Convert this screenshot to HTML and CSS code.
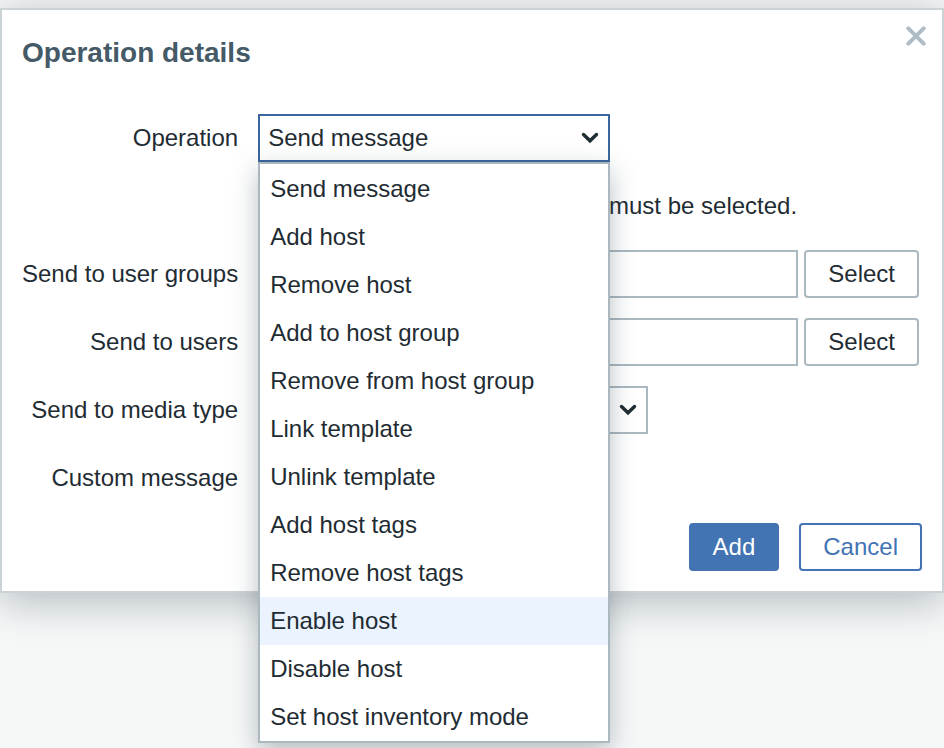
FILE: index.html
```html
<!DOCTYPE html>
<html lang="en">
<head>
<meta charset="utf-8">
<title>Operation details</title>
<link rel="stylesheet" href="styles.css">
</head>
<body>
<form class="dialog" role="dialog" aria-labelledby="dialog-title">
  <header class="dialog-header">
    <h1 class="dialog-title" id="dialog-title">Operation details</h1>
    <button class="close" type="button" aria-label="Close">
      <svg viewBox="0 0 20 20" width="20" height="20" aria-hidden="true"><path d="M2.3 2.3 17.7 17.7M17.7 2.3 2.3 17.7"/></svg>
    </button>
  </header>

  <div class="fields">
    <label class="label" for="operation">Operation</label>
    <div class="control">
      <div class="select-box operation">
        <select class="select is-open" id="operation">
          <option>Send message</option>
        </select>
        <svg class="chevron" viewBox="0 0 18 12" width="18" height="12" aria-hidden="true"><path d="M2.5 2.5 9 8.8 15.5 2.5"/></svg>
        <ul class="menu" role="listbox" aria-label="Operation">
          <li class="menu-item" role="option">Send message</li>
          <li class="menu-item" role="option">Add host</li>
          <li class="menu-item" role="option">Remove host</li>
          <li class="menu-item" role="option">Add to host group</li>
          <li class="menu-item" role="option">Remove from host group</li>
          <li class="menu-item" role="option">Link template</li>
          <li class="menu-item" role="option">Unlink template</li>
          <li class="menu-item" role="option">Add host tags</li>
          <li class="menu-item" role="option">Remove host tags</li>
          <li class="menu-item is-hovered" role="option">Enable host</li>
          <li class="menu-item" role="option">Disable host</li>
          <li class="menu-item" role="option">Set host inventory mode</li>
        </ul>
      </div>
    </div>

    <p class="note">* At least one user or user group must be selected.</p>

    <label class="label" for="groups">Send to user groups</label>
    <div class="control">
      <input class="input" id="groups" type="text">
      <button class="button" type="button">Select</button>
    </div>

    <label class="label" for="users">Send to users</label>
    <div class="control">
      <input class="input" id="users" type="text">
      <button class="button" type="button">Select</button>
    </div>

    <label class="label" for="media">Send to media type</label>
    <div class="control">
      <div class="select-box media">
        <select class="select" id="media">
          <option></option>
        </select>
        <svg class="chevron" viewBox="0 0 18 12" width="18" height="12" aria-hidden="true"><path d="M2.5 2.5 9 8.8 15.5 2.5"/></svg>
      </div>
    </div>

    <label class="label" for="custom">Custom message</label>
    <div class="control">
      <input class="checkbox" id="custom" type="checkbox">
    </div>
  </div>

  <footer class="dialog-footer">
    <button class="button primary" type="submit">Add</button>
    <button class="button secondary" type="button">Cancel</button>
  </footer>
</form>
</body>
</html>
```
FILE: styles.css
```css
* {
  box-sizing: border-box;
}

body {
  min-height: 100vh;
  margin: 0;
  padding-top: 8px;
  background: #f6f8f8;
  color: #1f2c33;
  font: 24px/48px "Liberation Sans", Arial, sans-serif;
}

button,
input,
select {
  font: inherit;
  color: inherit;
}

.dialog {
  padding: 0 20px 20px;
  background: #fff;
  border: 2px solid #ccd3d7;
  box-shadow: 0 8px 40px rgba(54, 70, 82, 0.36);
}

.dialog-header {
  display: flex;
  justify-content: space-between;
  align-items: flex-start;
  padding-top: 16px;
  margin-bottom: 34px;
}

.dialog-title {
  margin: 0;
  color: #455a67;
  font-size: 28px;
  line-height: 54px;
}

.close {
  display: flex;
  margin-right: -4px;
  padding: 0;
  border: 0;
  background: none;
}

.close path {
  fill: none;
  stroke: #b0bcc3;
  stroke-width: 4;
  stroke-linecap: round;
}

.fields {
  display: grid;
  grid-template-columns: auto 1fr;
  gap: 20px;
}

.label {
  text-align: right;
  white-space: nowrap;
}

.note {
  grid-column: 2;
  margin: 0;
  white-space: nowrap;
}

.control {
  display: flex;
  align-items: center;
  gap: 6px;
  height: 48px;
  padding-right: 3px;
}

.input,
.select {
  width: 100%;
  height: 48px;
  margin: 0;
  background: #fff;
  border: 2px solid #acb8c0;
  border-radius: 0;
  line-height: 44px;
  outline: 0;
}

.input {
  flex: 1;
  min-width: 0;
  padding: 0 8px;
}

.select {
  appearance: none;
  padding: 0 36px 0 8px;
}

.select.is-open {
  border-color: #3a659e;
}

.select-box {
  display: flex;
  position: relative;
}

.operation {
  width: 352px;
}

.media {
  width: 390px;
}

.chevron {
  position: absolute;
  top: 18px;
  right: 11px;
  pointer-events: none;
}

.chevron path {
  fill: none;
  stroke: #1f2c33;
  stroke-width: 3.4;
  stroke-linecap: round;
}

.menu {
  position: absolute;
  z-index: 1;
  top: 100%;
  left: 0;
  width: 100%;
  margin: 0;
  padding: 1px 0 0;
  list-style: none;
  background: #fff;
  border: 2px solid #acb8c0;
  box-shadow: 0 8px 24px rgba(54, 70, 82, 0.34);
}

.menu-item {
  padding: 0 10px;
  white-space: nowrap;
}

.menu-item.is-hovered {
  background: #eaf3fe;
}

.button {
  height: 48px;
  padding: 0 22px;
  background: #fff;
  border: 2px solid #acb8c0;
  border-radius: 4px;
  line-height: 44px;
}

.button.primary {
  background: #4274b3;
  border-color: #4274b3;
  color: #fff;
}

.button.secondary {
  border-color: #4274b3;
  color: #4274b3;
}

.checkbox {
  width: 28px;
  height: 28px;
  margin: 0;
}

.dialog-footer {
  display: flex;
  justify-content: flex-end;
  gap: 20px;
  margin-top: 21px;
}
```
